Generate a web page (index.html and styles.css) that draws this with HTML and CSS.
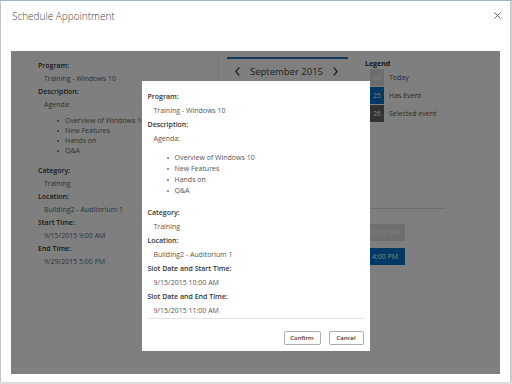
FILE: index.html
```html
<!DOCTYPE html>
<html lang="en">

<head>
    <meta charset="UTF-8">
    <meta name="viewport" content="width=device-width, initial-scale=1.0">
    <title>Schedule Appointment</title>
    <link rel="stylesheet" href="styles.css">
</head>

<body>
    <div class="dialog">
        <div class="dialog-header">
            <h1>Schedule Appointment</h1>
            <span class="close">
                <svg width="7" height="7" viewBox="0 0 7 7"><path d="M0.5 0.5L6.5 6.5M6.5 0.5L0.5 6.5" stroke="#666" stroke-width="1" fill="none"/></svg>
            </span>
        </div>

        <div class="dialog-body">
            <div class="page">
                <div class="details">
                    <div class="label">Program:</div>
                    <div class="value">Training - Windows 10</div>
                    <div class="label">Description:</div>
                    <div class="value">Agenda:</div>
                    <ul class="agenda">
                        <li>Overview of Windows 10</li>
                        <li>New Features</li>
                        <li>Hands on</li>
                        <li>Q&amp;A</li>
                    </ul>
                    <div class="label">Category:</div>
                    <div class="value">Training</div>
                    <div class="label">Location:</div>
                    <div class="value">Building2 - Auditorium 1</div>
                    <div class="label">Start Time:</div>
                    <div class="value">9/15/2015 9:00 AM</div>
                    <div class="label">End Time:</div>
                    <div class="value">9/29/2015 5:00 PM</div>
                </div>

                <div class="scheduler">
                    <div class="top-row">
                        <div class="calendar">
                            <div class="cal-head">
                                <svg width="5" height="9" viewBox="0 0 5 9"><polyline points="4.3,0.5 0.8,4.5 4.3,8.5" stroke="#444" stroke-width="1.3" fill="none"/></svg>
                                <span>September 2015</span>
                                <svg width="5" height="9" viewBox="0 0 5 9"><polyline points="0.7,0.5 4.2,4.5 0.7,8.5" stroke="#444" stroke-width="1.3" fill="none"/></svg>
                            </div>
                        </div>
                        <div class="legend">
                            <div class="legend-title">Legend</div>
                            <div class="legend-item"><span class="swatch today">24</span>Today</div>
                            <div class="legend-item"><span class="swatch has-event">25</span>Has Event</div>
                            <div class="legend-item"><span class="swatch selected">26</span>Selected event</div>
                        </div>
                    </div>
                    <div class="slots">
                        <div class="slot">12:00 PM</div>
                        <div class="slot booked">4:00 PM</div>
                    </div>
                </div>
            </div>

            <div class="overlay">
                <div class="modal">
                    <div class="label">Program:</div>
                    <div class="value">Training - Windows 10</div>
                    <div class="label">Description:</div>
                    <div class="value">Agenda:</div>
                    <ul class="agenda">
                        <li>Overview of Windows 10</li>
                        <li>New Features</li>
                        <li>Hands on</li>
                        <li>Q&amp;A</li>
                    </ul>
                    <div class="label">Category:</div>
                    <div class="value">Training</div>
                    <div class="label">Location:</div>
                    <div class="value">Building2 - Auditorium 1</div>
                    <div class="label">Slot Date and Start Time:</div>
                    <div class="value">9/15/2015 10:00 AM</div>
                    <div class="label">Slot Date and End Time:</div>
                    <div class="value">9/15/2015 11:00 AM</div>

                    <div class="modal-footer">
                        <button class="btn confirm">Confirm</button>
                        <button class="btn cancel">Cancel</button>
                    </div>
                </div>
            </div>
        </div>
    </div>
</body>

</html>
```

FILE: styles.css
```css
* {
    box-sizing: border-box;
}

body {
    margin: 0;
    padding: 0;
    background-color: #dcdcdc;
    border-top: 1px solid #9fb4cb;
    font-family: "Segoe UI", "Open Sans", sans-serif;
    color: #333;
}

.dialog {
    width: 509px;
    height: 381px;
    margin-left: 1px;
    background: white;
    box-shadow: 0 1px 3px rgba(0, 0, 0, 0.3);
}

.dialog-header {
    height: 50px;
    padding: 8px 9px 0 11px;
    display: flex;
    justify-content: space-between;
    align-items: flex-start;
}

.dialog-header h1 {
    margin: 0;
    font-size: 10px;
    line-height: 14px;
    font-weight: 300;
    color: #444;
}

.close {
    display: block;
    margin-top: 3px;
}

.close svg {
    display: block;
}

.dialog-body {
    position: relative;
    height: 323px;
    margin: 0 10px 0 10px;
    overflow: hidden;
}

.page {
    display: flex;
    height: 100%;
    background: white;
}

/* left column with appointment details */
.details {
    width: 208px;
    height: 290px;
    margin-top: 6px;
    padding: 2px 0 0 27px;
    border-right: 1px solid #e8e8e8;
    font-size: 7px;
    line-height: 13px;
}

.label {
    font-weight: 600;
    color: #333;
}

.value {
    padding-left: 6px;
    color: #666;
}

.agenda {
    list-style: none;
    margin: 5px 0 8px;
    padding: 0 0 0 19px;
    color: #666;
}

.agenda li {
    display: flex;
    align-items: center;
    line-height: 10px;
}

.agenda li::before {
    content: "";
    width: 2px;
    height: 2px;
    border-radius: 50%;
    background: #777;
    margin-right: 6px;
}

/* calendar side */
.scheduler {
    margin: 6px 0 0 8px;
}

.top-row {
    display: flex;
    height: 151px;
}

.calendar {
    width: 121px;
    border-top: 2px solid #2a6cb8;
}

.cal-head {
    display: flex;
    justify-content: space-between;
    align-items: center;
    padding: 5px 10px 0 8px;
    height: 19px;
    font-size: 9.5px;
    color: #444;
}

.cal-head svg {
    display: block;
}

.legend {
    margin-left: 17px;
    padding-top: 2px;
    font-size: 7px;
}

.legend-title {
    font-weight: 700;
    line-height: 10px;
    color: #333;
}

.legend-item {
    display: flex;
    align-items: center;
    margin: 0 0 1px 5px;
    color: #555;
}

.swatch {
    width: 14px;
    height: 17px;
    line-height: 17px;
    margin-right: 5px;
    text-align: center;
    font-size: 6.5px;
    color: white;
}

.swatch.today {
    background: #dadada;
}

.swatch.has-event {
    background: #0072c6;
}

.swatch.selected {
    background: #666;
}

.slots {
    width: 219px;
    border-top: 1px solid #dedede;
    padding: 15px 0 0 138px;
}

.slot {
    width: 40px;
    height: 17px;
    line-height: 17px;
    margin-bottom: 7px;
    text-align: center;
    font-size: 7px;
    background: #dcdcdc;
    color: white;
}

.slot.booked {
    background: #0072c6;
}

/* confirmation popup */
.overlay {
    position: absolute;
    top: 0;
    left: 0;
    right: 0;
    bottom: 0;
    background: rgba(0, 0, 0, 0.5);
    display: flex;
    justify-content: center;
    align-items: flex-start;
    padding-top: 30px;
}

.modal {
    width: 228px;
    background: white;
    padding: 9px 6px 6px;
    font-size: 7px;
    line-height: 14px;
}

.modal .value {
    color: #555;
}

.modal .agenda {
    margin: 6px 0 10px;
    color: #555;
}

.modal .agenda li {
    line-height: 11px;
}

.modal-footer {
    display: flex;
    justify-content: flex-end;
    gap: 8px;
    margin-top: 0;
    padding-top: 12px;
    border-top: 1px solid #e3e3e3;
}

.btn {
    height: 14px;
    padding: 0;
    background: white;
    border: 1px solid #adadad;
    border-radius: 2px;
    font-family: "Segoe UI", "Open Sans", sans-serif;
    font-size: 6px;
    font-weight: 600;
    color: #333;
    cursor: pointer;
}

.btn.confirm {
    width: 37px;
}

.btn.cancel {
    width: 35px;
}
```
